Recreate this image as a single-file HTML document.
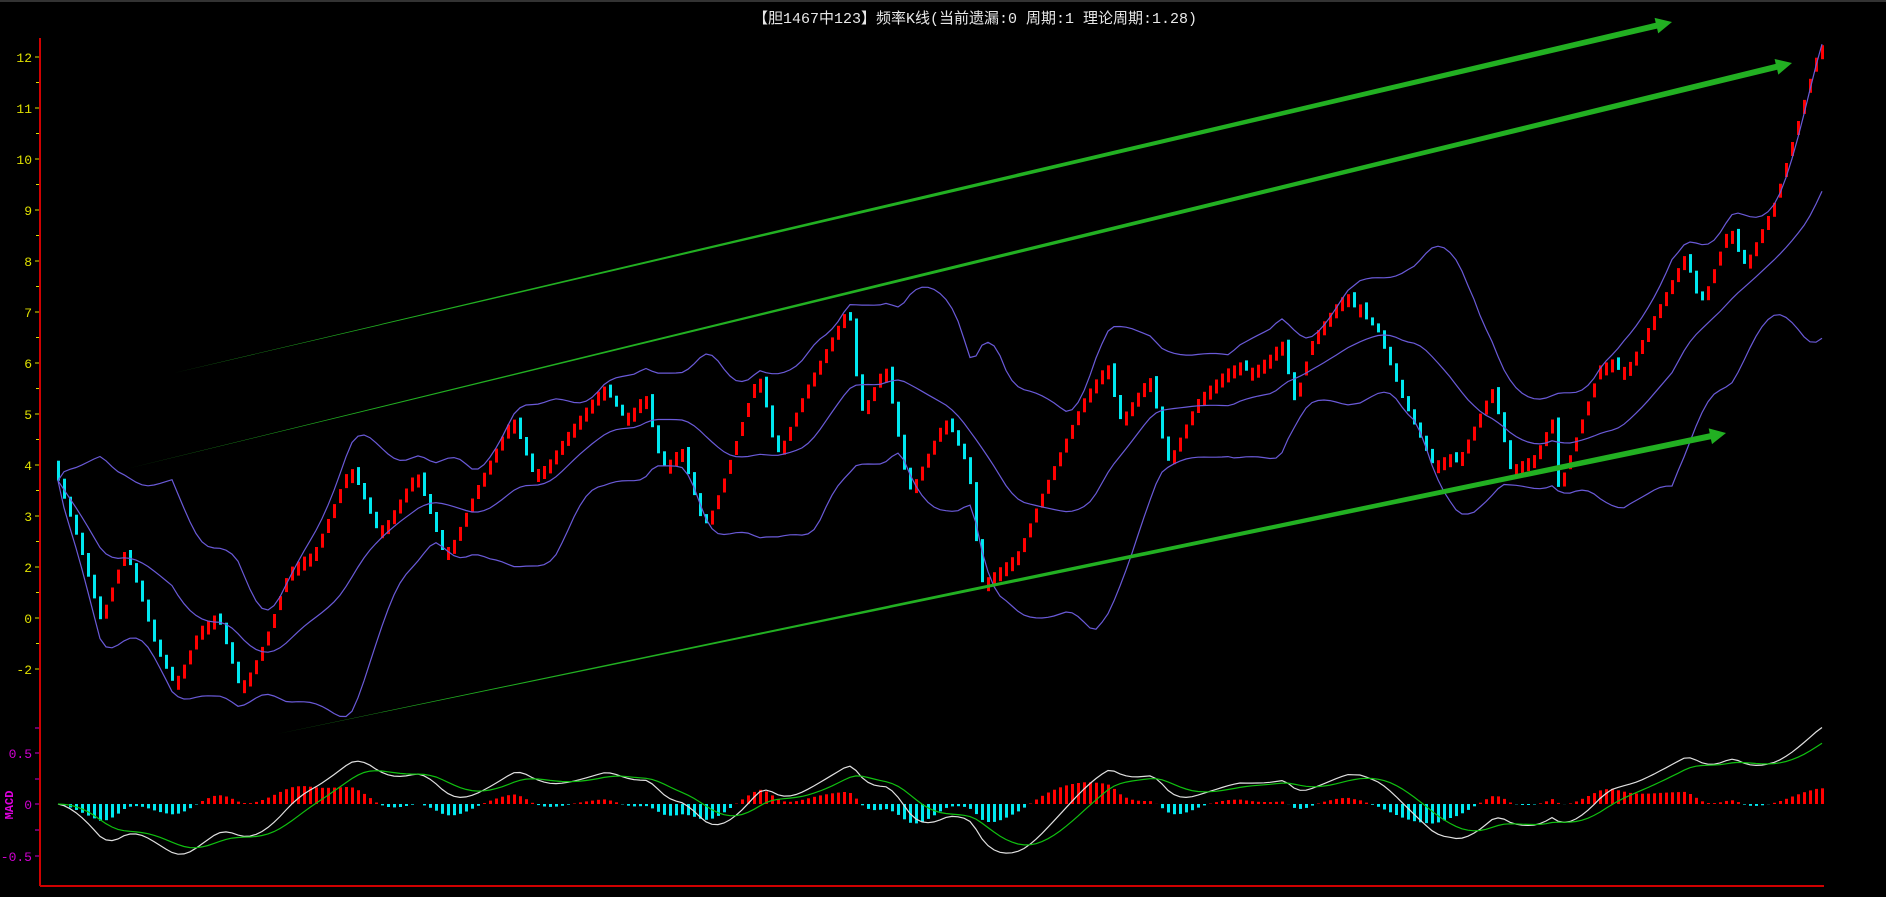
<!DOCTYPE html>
<html><head><meta charset="utf-8">
<style>
html,body{margin:0;padding:0;background:#000;width:1886px;height:897px;overflow:hidden}
svg{display:block}
text{font-family:"Liberation Mono","Noto Sans CJK SC",monospace}
</style></head><body>
<svg id="s" width="1886" height="897" xmlns="http://www.w3.org/2000/svg">
<rect width="1886" height="897" fill="#000"/>
<line x1="0" y1="1" x2="1886" y2="1" stroke="#333" stroke-width="2"/>
<text x="975" y="23" fill="#e8e8e8" font-size="15" text-anchor="middle" font-family="Liberation Mono, Noto Sans CJK SC, monospace">【胆1467中123】频率K线(当前遗漏:0 周期:1 理论周期:1.28)</text>
<g id="g"></g>
<line x1="40" y1="38" x2="40" y2="886" stroke="#d00000" stroke-width="2"/>
<line x1="40" y1="886" x2="1824" y2="886" stroke="#d00000" stroke-width="2"/>
<g font-size="13" fill="#e0e000" text-anchor="end">
<text x="32" y="62">12</text><text x="32" y="113">11</text><text x="32" y="164">10</text><text x="32" y="215">9</text><text x="32" y="266">8</text><text x="32" y="317">7</text><text x="32" y="368">6</text><text x="32" y="419">5</text><text x="32" y="470">4</text><text x="32" y="521">3</text><text x="32" y="572">2</text><text x="32" y="623">0</text><text x="32" y="674">-2</text>
</g>
<g font-size="13" fill="#d000d0" text-anchor="end">
<text x="32" y="758">0.5</text><text x="32" y="809">0</text><text x="32" y="861">-0.5</text>
</g>
<text x="13" y="805" fill="#e000e0" font-size="12" font-weight="bold" transform="rotate(-90 13 805)" text-anchor="middle" font-family="Liberation Serif, serif">MACD</text>
<g id="ticks"></g>
</svg>
<script>
var g=document.getElementById('g'),tk=document.getElementById('ticks'),h='';
var t='';
for(var i=0;i<13;i++){var y=57+i*51;t+='<line x1="35" y1="'+y+'" x2="39" y2="'+y+'" stroke="#e0e000"/>';if(i<12)t+='<line x1="36" y1="'+(y+25.5)+'" x2="39" y2="'+(y+25.5)+'" stroke="#e0e000"/>';}
[728,753,779,804,830,856].forEach(function(y){t+='<line x1="35" y1="'+y+'" x2="39" y2="'+y+'" stroke="#d000d0"/>';});
tk.innerHTML=t;
var kp=[50,390,70,450,88,515,108,455,120,490,135,540,150,570,170,520,185,510,205,575,225,530,245,470,265,460,295,385,320,445,350,390,375,465,400,405,430,345,450,400,475,360,505,320,525,350,540,325,555,390,570,370,590,440,605,400,635,305,650,380,675,320,710,252,720,345,740,300,760,410,790,345,810,390,820,485,850,460,870,410,905,330,925,300,935,350,960,310,975,385,1000,330,1025,305,1050,310,1070,280,1080,335,1095,280,1120,245,1150,275,1170,330,1195,385,1215,385,1245,320,1260,390,1280,380,1295,345,1300,405,1335,300,1355,310,1370,280,1405,210,1418,255,1440,190,1455,220,1480,165,1517,35];
var K=1.203,P=[];for(i=0;i<kp.length;i+=2)P.push([kp[i]*K,kp[i+1]*K]);
function tg(x){for(var j=1;j<P.length;j++){if(x<=P[j][0]){var a=P[j-1],b=P[j];return a[1]+(b[1]-a[1])*(x-a[0])/(b[0]-a[0]);}}return P[P.length-1][1];}
var xs=[],cl=[],p=tg(58);
for(var x=58;x<=1822;x+=6){var tt=tg(x+6),np;
 if(tt<p-2){np=p-Math.max(5,Math.min(24,(p-tt)*0.8));h+='<rect x="'+(x-1)+'" y="'+np.toFixed(1)+'" width="3" height="14" fill="#ff0000"/>';}
 else if(tt>p+6){np=tt;h+='<rect x="'+(x-1)+'" y="'+(p-2).toFixed(1)+'" width="3" height="'+(np-p+2).toFixed(1)+'" fill="#00e8f0"/>';}
 else {np=p-3;h+='<rect x="'+(x-1)+'" y="'+np.toFixed(1)+'" width="3" height="13" fill="#ff0000"/>';}
 p=np;xs.push(x);cl.push(p);}
var N=20,up=[],md=[],lo=[];
for(i=0;i<cl.length;i++){var s=0,c=0;for(var j=Math.max(0,i-N+1);j<=i;j++){s+=cl[j];c++;}var m=s/c,v=0;for(j=Math.max(0,i-N+1);j<=i;j++)v+=(cl[j]-m)*(cl[j]-m);var sd=Math.sqrt(v/c);md.push(m);up.push(m-2*sd);lo.push(m+2*sd);}
function pl(a,col,w){var d='';for(var k=0;k<a.length;k++)d+=(k?'L':'M')+xs[k]+','+a[k].toFixed(1);return '<path d="'+d+'" fill="none" stroke="'+col+'" stroke-width="'+w+'"/>';}
h+=pl(up,'#6a5ad8',1.2)+pl(md,'#6a5ad8',1.2)+pl(lo,'#6a5ad8',1.2);
var e12=0,e26=0,dif=[],dea=[],de=0;
for(i=0;i<cl.length;i++){var v2=-cl[i]/51;if(i==0){e12=e26=v2;}e12=e12+(v2-e12)*2/13;e26=e26+(v2-e26)*2/27;var d1=e12-e26;dif.push(d1);de=i?de+(d1-de)*2/10:d1;dea.push(de);}
var mx=0;for(i=0;i<dif.length;i++)mx=Math.max(mx,Math.abs(dif[i]));var sc=0.75/mx;
function my(v){return 804-v*sc*102;}
for(i=0;i<dif.length;i++){var hv=(dif[i]-dea[i]);var y1=my(hv);var col=hv>0?'#ff0000':'#00e8f0';var ya=Math.min(804,y1),hh=Math.abs(y1-804);h+='<rect x="'+(xs[i]-1)+'" y="'+ya.toFixed(1)+'" width="3" height="'+hh.toFixed(1)+'" fill="'+col+'"/>';}
var dd='',ee='';for(i=0;i<dif.length;i++){dd+=(i?'L':'M')+xs[i]+','+my(dif[i]).toFixed(1);ee+=(i?'L':'M')+xs[i]+','+my(dea[i]).toFixed(1);}
h+='<path d="'+dd+'" fill="none" stroke="#e0e0e0" stroke-width="1.2"/><path d="'+ee+'" fill="none" stroke="#10c010" stroke-width="1.2"/>';
function arr(x1,y1,x2,y2){var dx=x2-x1,dy=y2-y1,L=Math.sqrt(dx*dx+dy*dy),ux=dx/L,uy=dy/L,nx=-uy,ny=ux;var hx=x2-ux*16,hy=y2-uy*16;
 var pts=[[x1,y1],[hx+nx*3,hy+ny*3],[hx+nx*8,hy+ny*8],[x2,y2],[hx-nx*8,hy-ny*8],[hx-nx*3,hy-ny*3]];
 return '<polygon points="'+pts.map(function(q){return q[0].toFixed(1)+','+q[1].toFixed(1)}).join(' ')+'" fill="#22b022"/>';}
h+=arr(174,373,1672,22)+arr(126,469,1792,63)+arr(277,734,1726,433);
g.innerHTML=h;
</script>
</body></html>
